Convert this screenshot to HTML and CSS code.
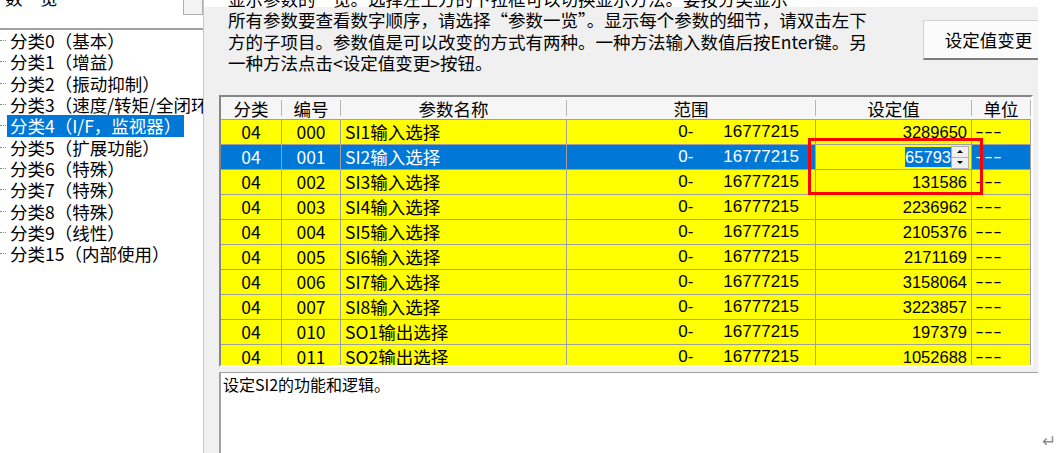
FILE: index.html
```html
<!DOCTYPE html>
<html lang="zh-CN">
<head>
<meta charset="utf-8">
<title>参数一览</title>
<link rel="stylesheet" href="styles.css">
</head>
<body>
<div class="app">
  <aside class="nav">
    <div class="combo">
      <span class="combo-text">数一览</span>
      <span class="combo-btn"></span>
    </div>
    <ul class="tree">
      <li class="item"><span class="dot"></span><span class="label">分类0（基本）</span></li>
      <li class="item"><span class="dot"></span><span class="label">分类1（增益）</span></li>
      <li class="item"><span class="dot"></span><span class="label">分类2（振动抑制）</span></li>
      <li class="item"><span class="dot"></span><span class="label">分类3（速度/转矩/全闭环）</span></li>
      <li class="item sel"><span class="dot"></span><span class="label">分类4（I/F，监视器）</span></li>
      <li class="item"><span class="dot"></span><span class="label">分类5（扩展功能）</span></li>
      <li class="item"><span class="dot"></span><span class="label">分类6（特殊）</span></li>
      <li class="item"><span class="dot"></span><span class="label">分类7（特殊）</span></li>
      <li class="item"><span class="dot"></span><span class="label">分类8（特殊）</span></li>
      <li class="item"><span class="dot"></span><span class="label">分类9（线性）</span></li>
      <li class="item"><span class="dot"></span><span class="label">分类15（内部使用）</span></li>
    </ul>
  </aside>

  <main class="main">
    <div class="top">
      <div class="desc">
        <div>显示参数的一览。选择左上方的下拉框可以切换显示方法。要按分类显示</div>
        <div>所有参数要查看数字顺序，请选择“参数一览”。显示每个参数的细节，请双击左下</div>
        <div>方的子项目。参数值是可以改变的方式有两种。一种方法输入数值后按Enter键。另</div>
        <div>一种方法点击&lt;设定值变更&gt;按钮。</div>
      </div>
      <button class="btn" type="button">设定值变更</button>
    </div>

    <div class="grid">
      <div class="hdr">
        <div class="hc">分类</div>
        <div class="hc">编号</div>
        <div class="hc">参数名称</div>
        <div class="hc">范围</div>
        <div class="hc">设定值</div>
        <div class="hc">单位</div>
      </div>
      <div class="rows">
        <div class="row"><div class="c ctr">04</div><div class="c ctr">000</div><div class="c name">SI1输入选择</div><div class="c range"><span>0-</span><span>16777215</span></div><div class="c val">3289650</div><div class="c unit">–––</div></div>
        <div class="row sel"><div class="c ctr">04</div><div class="c ctr">001</div><div class="c name">SI2输入选择</div><div class="c range"><span>0-</span><span>16777215</span></div><div class="c edit"><span class="selected">65793</span><span class="spin"><span class="sb"><span class="up"></span></span><span class="sb"><span class="down"></span></span></span></div><div class="c unit">–––</div></div>
        <div class="row"><div class="c ctr">04</div><div class="c ctr">002</div><div class="c name">SI3输入选择</div><div class="c range"><span>0-</span><span>16777215</span></div><div class="c val">131586</div><div class="c unit">–––</div></div>
        <div class="row"><div class="c ctr">04</div><div class="c ctr">003</div><div class="c name">SI4输入选择</div><div class="c range"><span>0-</span><span>16777215</span></div><div class="c val">2236962</div><div class="c unit">–––</div></div>
        <div class="row"><div class="c ctr">04</div><div class="c ctr">004</div><div class="c name">SI5输入选择</div><div class="c range"><span>0-</span><span>16777215</span></div><div class="c val">2105376</div><div class="c unit">–––</div></div>
        <div class="row"><div class="c ctr">04</div><div class="c ctr">005</div><div class="c name">SI6输入选择</div><div class="c range"><span>0-</span><span>16777215</span></div><div class="c val">2171169</div><div class="c unit">–––</div></div>
        <div class="row"><div class="c ctr">04</div><div class="c ctr">006</div><div class="c name">SI7输入选择</div><div class="c range"><span>0-</span><span>16777215</span></div><div class="c val">3158064</div><div class="c unit">–––</div></div>
        <div class="row"><div class="c ctr">04</div><div class="c ctr">007</div><div class="c name">SI8输入选择</div><div class="c range"><span>0-</span><span>16777215</span></div><div class="c val">3223857</div><div class="c unit">–––</div></div>
        <div class="row"><div class="c ctr">04</div><div class="c ctr">010</div><div class="c name">SO1输出选择</div><div class="c range"><span>0-</span><span>16777215</span></div><div class="c val">197379</div><div class="c unit">–––</div></div>
        <div class="row"><div class="c ctr">04</div><div class="c ctr">011</div><div class="c name">SO2输出选择</div><div class="c range"><span>0-</span><span>16777215</span></div><div class="c val">1052688</div><div class="c unit">–––</div></div>
      </div>
    </div>

    <div class="memo">设定SI2的功能和逻辑。</div>
  </main>

  <div class="margin"><span class="ret">↵</span></div>
</div>
<div class="mark"></div>
</body>
</html>
```

FILE: styles.css
```css
* { box-sizing: border-box; }
html, body { margin: 0; padding: 0; }
body {
  width: 1061px;
  height: 453px;
  overflow: hidden;
  background: #fff;
  color: #000;
  font-family: "Noto Sans CJK SC", sans-serif;
  position: relative;
}
.app { display: flex; height: 453px; }

/* left navigation */
.nav {
  width: 204px;
  flex: none;
  display: flex;
  flex-direction: column;
  background: #fff;
  border-right: 1px solid #c8c8c8;
  overflow: hidden;
}
.combo { height: 28px; flex: none; display: flex; align-items: flex-start; overflow: hidden; }
.combo-text {
  font-size: 17.5px;
  line-height: 20px;
  margin-top: -12px;
  margin-left: 5px;
  white-space: nowrap;
}
.combo-btn {
  margin-left: auto;
  width: 20px;
  height: 15px;
  background: #f3f3f3;
  border: 1px solid #adadad;
  border-top: none;
}
.tree {
  list-style: none;
  margin: 0;
  padding: 0;
  flex: 1;
  border-top: 2px solid #a0a0a0;
  overflow: hidden;
}
.item {
  display: flex;
  align-items: center;
  height: 21.33px;
  font-size: 17.5px;
  white-space: nowrap;
}
.dot { width: 6px; flex: none; border-top: 1px dotted #8a8a8a; margin-right: 1px; }
.label { padding: 0 3px; line-height: 21.33px; }
.item.sel .label { background: #0078d7; color: #fff; }

/* main pane */
.main {
  width: 834px;
  flex: none;
  display: flex;
  flex-direction: column;
  background: #f0f0f0;
  overflow: hidden;
}
.top {
  height: 95px;
  flex: none;
  display: flex;
  background: linear-gradient(#fff 0 7px, #f0f0f0 7px);
}
.desc {
  width: 719px;
  flex: none;
  padding-left: 24px;
  margin-top: -12.5px;
  font-size: 17.5px;
  line-height: 21.5px;
  white-space: nowrap;
}
.btn {
  width: 131px;
  height: 40px;
  flex: none;
  margin: 20px 0 0 0;
  padding: 0;
  background: #fbfbfb;
  border: 1px solid #d2d2d2;
  border-bottom: 2px solid #7d7d7d;
  font-family: "Noto Sans CJK SC", sans-serif;
  font-size: 17.5px;
  color: #000;
  text-align: center;
}

/* grid */
.grid {
  margin-left: 15px;
  width: 814px;
  height: 272px;
  flex: none;
  display: flex;
  flex-direction: column;
  border: 2px solid;
  border-color: #868686 #fff #fff #868686;
  background: #f0f0f0;
  overflow: hidden;
}
.hdr, .row {
  display: grid;
  grid-template-columns: 61px 59px 226px 249px 156px 59px;
}
.hdr {
  flex: none;
  height: 23px;
  background: #f6f6f6;
  border-bottom: 1px solid #a0a0a0;
}
.hc {
  height: 16px;
  margin: 3px 0;
  border-right: 1px solid #b4b4b4;
  display: flex;
  align-items: center;
  justify-content: center;
  font-size: 17.5px;
  white-space: nowrap;
}
.rows { flex: 1; overflow: hidden; }
.row {
  height: 25px;
  background: #ffff00;
  border-bottom: 1px solid #a0a0a0;
}
.row.sel { background: #0078d7; color: #fff; }
.c {
  border-right: 1px solid #a0a0a0;
  line-height: 24px;
  font-size: 17.5px;
  white-space: nowrap;
  overflow: hidden;
}
.ctr { text-align: center; }
.name { padding-left: 4px; }
.range {
  display: flex;
  justify-content: flex-end;
  gap: 30px;
  padding-right: 16px;
  font-family: "Liberation Sans", sans-serif;
  font-size: 17px;
}
.val {
  text-align: right;
  padding-right: 4px;
  font-family: "Liberation Sans", sans-serif;
  font-size: 16.5px;
}
.unit {
  padding-left: 4px;
  font-family: "Liberation Sans", sans-serif;
  font-size: 12.5px;
  font-weight: bold;
  letter-spacing: 2px;
}
.edit {
  background: #ffff00;
  display: flex;
  justify-content: flex-end;
  align-items: center;
  padding-right: 2px;
}
.selected {
  background: #0078d7;
  color: #fff;
  line-height: 20px;
  font-family: "Liberation Sans", sans-serif;
  font-size: 16.5px;
}
.spin {
  width: 18px;
  height: 23px;
  display: flex;
  flex-direction: column;
}
.sb {
  flex: 1;
  display: flex;
  align-items: center;
  justify-content: center;
  background: #f0f0f0;
  border: 1px solid #b0b0b0;
}
.sb + .sb { border-top: none; }
.up, .down { width: 0; height: 0; border-left: 3px solid transparent; border-right: 3px solid transparent; }
.up { border-bottom: 3px solid #000; }
.down { border-top: 3px solid #000; }

/* bottom memo */
.memo {
  flex: 1;
  margin: 5px 0 0 15px;
  background: #fff;
  border-top: 1px solid #a0a0a0;
  border-left: 2px solid #a0a0a0;
  padding: 3px 2px;
  font-size: 16px;
  line-height: 16px;
}

/* right page margin */
.margin {
  flex: 1;
  display: flex;
  align-items: flex-end;
  padding: 0 0 2px 4px;
}
.ret {
  font-family: "DejaVu Sans", sans-serif;
  font-size: 17px;
  line-height: 20px;
  color: #8c8c8c;
}

/* red annotation box drawn over the grid */
.mark {
  position: absolute;
  left: 808px;
  top: 138px;
  width: 175px;
  height: 57px;
  border: 3px solid #f00;
}
```
